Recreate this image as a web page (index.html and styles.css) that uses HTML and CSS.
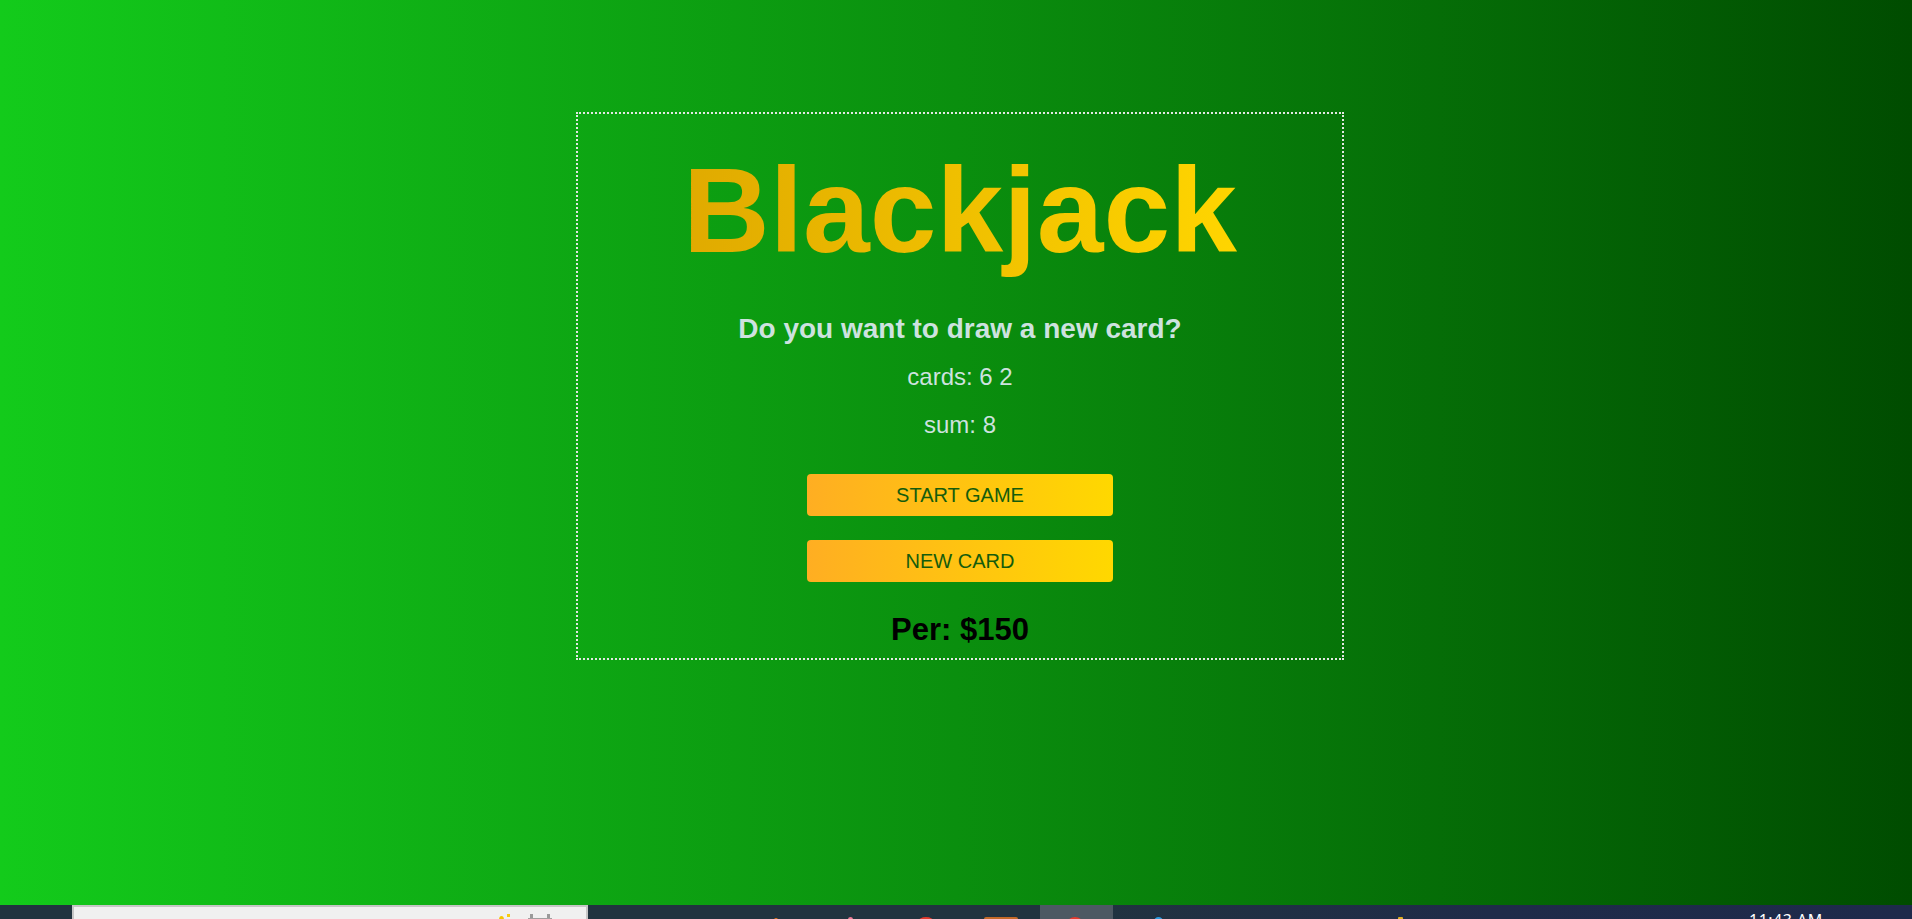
FILE: index.html
```html
<!DOCTYPE html>
<html lang="en">
<head>
<meta charset="utf-8">
<title>Blackjack</title>
<link rel="stylesheet" href="styles.css">
</head>
<body>
<div class="page">
  <main class="table">
    <section class="box">
      <h1 class="title"><span class="title-text">Blackjack</span></h1>
      <p class="message">Do you want to draw a new card?</p>
      <p class="info cards">cards: 6 2</p>
      <p class="info sum">sum: 8</p>
      <button class="btn btn-start">START GAME</button>
      <button class="btn btn-new">NEW CARD</button>
      <p class="player">Per: $150</p>
    </section>
  </main>
  <footer class="taskbar">
    <div class="tb-panel">
      <span class="spark-big"></span>
      <span class="spark-small"></span>
      <span class="cal">
        <span class="cal-tab"></span>
        <span class="cal-tab"></span>
        <span class="cal-body"></span>
      </span>
    </div>
    <span class="ico ico-orange"></span>
    <span class="ico ico-pink"></span>
    <span class="ico ico-red"></span>
    <span class="ico ico-brown"></span>
    <div class="tb-active"><span class="ico ico-chrome"></span></div>
    <span class="ico ico-blue"></span>
    <span class="ico ico-yellow"></span>
    <span class="clock">11:43 AM</span>
  </footer>
</div>
</body>
</html>
```

FILE: styles.css
```css
html, body {
  margin: 0;
  padding: 0;
}

body {
  width: 1912px;
  height: 919px;
  overflow: hidden;
  font-family: "Liberation Sans", Arial, sans-serif;
}

.page {
  display: flex;
  flex-direction: column;
  height: 919px;
}

.table {
  height: 905px;
  box-sizing: border-box;
  padding: 112px 0 0 8px;
  display: flex;
  justify-content: center;
  align-items: flex-start;
  background: linear-gradient(to right, #13cb1b 0%, #0a8f0e 50%, #004c00 100%);
}

.box {
  width: 768px;
  box-sizing: border-box;
  border: 2px dotted #e4e8e4;
  padding: 27px 0 11px;
  display: flex;
  flex-direction: column;
  align-items: center;
  text-align: center;
}

.title {
  margin: 0 0 34px;
  display: flex;
  justify-content: center;
  font-size: 120px;
  font-weight: 700;
  line-height: 138px;
}

.title-text {
  display: block;
  background: linear-gradient(to right, #e0aa00, #ffd500);
  -webkit-background-clip: text;
  background-clip: text;
  color: transparent;
}

.message {
  margin: 0;
  font-size: 28px;
  font-weight: 700;
  line-height: 32px;
  color: #cde2df;
}

.info {
  margin: 0;
  font-size: 24px;
  line-height: 28px;
  color: #cde2df;
}

.cards {
  margin-top: 18px;
}

.sum {
  margin-top: 20px;
}

.btn {
  display: block;
  width: 306px;
  height: 42px;
  border: none;
  border-radius: 4px;
  padding: 0;
  font-family: inherit;
  font-size: 20px;
  color: #145c0c;
  background: linear-gradient(to right, #ffae22, #ffd800);
}

.btn-start {
  margin-top: 35px;
}

.btn-new {
  margin-top: 24px;
}

.player {
  margin: 30px 0 0;
  font-size: 31px;
  font-weight: 700;
  line-height: 35px;
  color: #000;
}

/* taskbar */
.taskbar {
  height: 14px;
  display: flex;
  align-items: flex-start;
  overflow: hidden;
  background: linear-gradient(to right, #21343f 0%, #21343f 55%, #1f2b49 78%, #1e2a4b 100%);
}

.tb-panel {
  margin-left: 72px;
  width: 516px;
  height: 14px;
  flex: none;
  box-sizing: border-box;
  border: 2px solid #c6c6c6;
  border-bottom: none;
  background: #f0f0f0;
  display: flex;
  align-items: flex-start;
}

.spark-big {
  margin: 9px 0 0 425px;
  width: 5px;
  height: 8px;
  border-radius: 50% 50% 0 0;
  background: #f4c400;
}

.spark-small {
  margin: 7px 0 0 3px;
  width: 3px;
  height: 3px;
  background: #f7cc10;
}

.cal {
  margin: 7px 0 0 18px;
  width: 24px;
  height: 10px;
  position: relative;
  display: flex;
  justify-content: space-between;
}

.cal-tab {
  margin: 0 2px;
  width: 3px;
  height: 6px;
  background: #9a9a9a;
}

.cal-body {
  position: absolute;
  left: 0;
  right: 0;
  top: 4px;
  height: 6px;
  border: 1px solid #a0a0a0;
  background: #9aa6e0;
}

.ico {
  flex: none;
  display: block;
  border-radius: 50%;
}

.ico-orange {
  margin: 13px 0 0 186px;
  width: 4px;
  height: 4px;
  background: #e0701a;
}

.ico-pink {
  margin: 12px 0 0 70px;
  width: 5px;
  height: 5px;
  background: #f07a96;
}

.ico-red {
  margin: 12px 0 0 65px;
  width: 16px;
  height: 10px;
  background: #e23a2c;
}

.ico-brown {
  margin: 12px 0 0 50px;
  width: 34px;
  height: 6px;
  border-radius: 2px;
  background: #c46a28;
}

.tb-active {
  flex: none;
  margin-left: 22px;
  width: 73px;
  height: 14px;
  background: #4d5963;
  display: flex;
  align-items: flex-start;
}

.ico-chrome {
  margin: 12px 0 0 26px;
  width: 18px;
  height: 18px;
  background: #e53b2e;
}

.ico-blue {
  margin: 12px 0 0 41px;
  width: 9px;
  height: 8px;
  background: #2d9be0;
}

.ico-yellow {
  margin: 12px 0 0 235px;
  width: 5px;
  height: 6px;
  border-radius: 1px;
  background: #e2b020;
}

.clock {
  flex: none;
  margin: 6px 0 0 346px;
  font-family: "Segoe UI", "Noto Sans", "Liberation Sans", sans-serif;
  font-size: 16px;
  line-height: 18px;
  letter-spacing: 0.5px;
  color: #ffffff;
  white-space: nowrap;
}
```
